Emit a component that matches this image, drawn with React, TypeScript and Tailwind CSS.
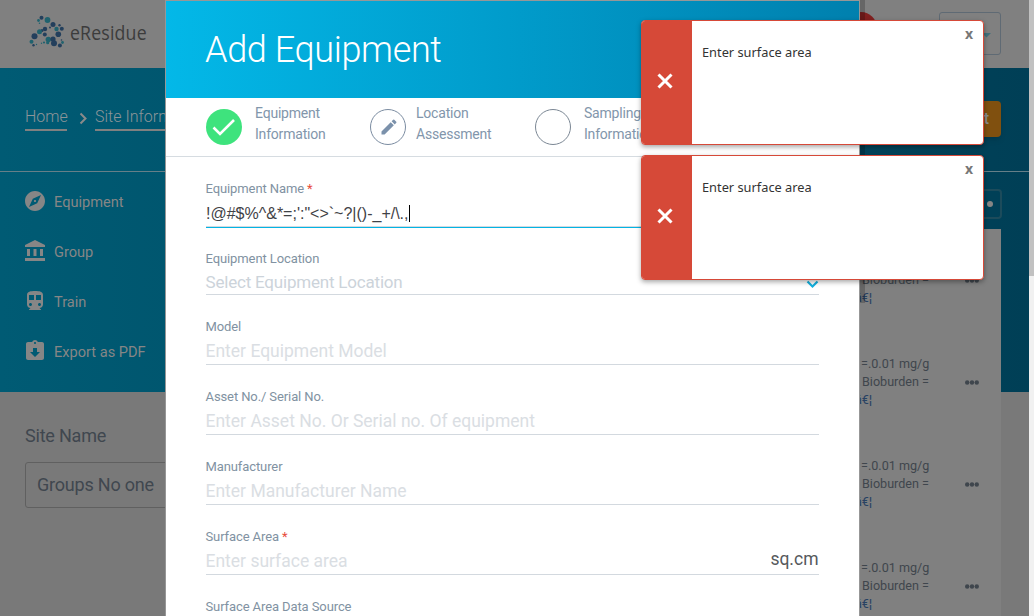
import React from "react";
import {
  MdAccountBalance,
  MdAssignmentReturned,
  MdExplore,
  MdDirectionsTransit,
  MdEdit,
} from "react-icons/md";

const dots: [number, number, number, string][] = [
  [41.5, 17.8, 2, "#233f5c"],
  [47.5, 20, 2.9, "#20626e"],
  [38.5, 20.5, 1.4, "#20626e"],
  [39.5, 23.2, 0.8, "#20626e"],
  [53, 24.5, 2.5, "#233f5c"],
  [59.5, 25.3, 1.2, "#233f5c"],
  [56.5, 29, 2.2, "#20626e"],
  [61.8, 28.8, 2, "#233f5c"],
  [50, 27.5, 1, "#233f5c"],
  [45, 29, 2.2, "#233f5c"],
  [42, 30.5, 1.5, "#233f5c"],
  [39.5, 31.7, 2.5, "#20626e"],
  [34.5, 36.3, 3, "#233f5c"],
  [44.8, 34.4, 2, "#233f5c"],
  [58.3, 34.2, 2.8, "#233f5c"],
  [31.5, 41.8, 2, "#20626e"],
  [48.3, 39.5, 2.7, "#20626e"],
  [53, 39, 2.6, "#233f5c"],
  [54, 43.3, 3, "#233f5c"],
  [47.7, 42.7, 1.6, "#20626e"],
  [59.9, 45.6, 2, "#233f5c"],
  [62.5, 42.5, 1.4, "#20626e"],
  [61.5, 40, 0.8, "#233f5c"],
  [44, 42.5, 1.1, "#20626e"],
  [41.5, 43.3, 0.7, "#20626e"],
  [33.5, 45.2, 1.2, "#233f5c"],
  [36.5, 44.5, 0.7, "#20626e"],
];

const nav = [
  { label: "Equipment", Icon: MdExplore },
  { label: "Group", Icon: MdAccountBalance },
  { label: "Train", Icon: MdDirectionsTransit },
  { label: "Export as PDF", Icon: MdAssignmentReturned },
];

function Backdrop() {
  return (
    <div className="flex h-[616px] w-[1034px]">
      <div className="flex h-full w-[1029px] flex-col bg-[#797979]">
        <header className="flex h-[68px] shrink-0 items-start justify-between bg-[#808080] pr-7">
          <div className="flex">
            <svg width="69" height="68" viewBox="0 0 69 68">
              {dots.map(([x, y, r, c], i) => (
                <circle key={i} cx={x} cy={y} r={r} fill={c} />
              ))}
            </svg>
            <span className="mt-[19px] ml-[0.5px] origin-left scale-x-[0.885] text-[20px] leading-7 font-normal tracking-[0.2px] text-[#3c3c3c] [font-family:'Open_Sans',sans-serif]">
              eResidue
            </span>
          </div>
          <div className="flex items-start">
            <div className="mt-3 mr-[62px] size-8 rounded-full bg-[#81201f]" />
            <div className="mt-3 flex h-[43px] w-[62px] items-center justify-end rounded-[3px] border border-[#5f6a74] pr-[9px]">
              <svg className="mt-[3px]" width="9" height="5" viewBox="0 0 9 5">
                <path d="M0 0h9L4.5 4.5z" fill="#41707c" />
              </svg>
            </div>
          </div>
        </header>
        <div className="flex h-[324px] shrink-0 flex-col bg-linear-to-r from-[#005b74] to-[#003f56]">
          <div className="flex h-[104px] shrink-0 items-start justify-between border-b border-[#667f88] pr-7 pl-[25px]">
            <div className="mt-[38px] flex text-base leading-[21px] font-light text-[#8c9599]">
              <span className="h-[25px] w-[42px] border-b-2 border-[#808080]">Home</span>
              <svg width="28" height="25" viewBox="0 0 28 25" fill="none" stroke="#8a8a8a" strokeWidth="2">
                <path d="M13.5 7.5l5 5-5 5" />
              </svg>
              <span className="h-[25px] border-b-2 border-[#808080] whitespace-nowrap">Site Information</span>
            </div>
            <div className="mt-[33px] flex h-9 w-[130px] items-center justify-end rounded bg-[#80500f] pr-[12px] text-base font-medium whitespace-nowrap text-[#8b8b8b] shadow-md">
              Add Equipment
            </div>
          </div>
          <div className="flex flex-1 justify-between">
            <nav className="flex flex-col pt-[4px] pl-[25px]">
              {nav.map(({ label, Icon }) => (
                <div key={label} className="flex h-[50px] items-center text-[#868686]">
                  <Icon className="-ml-0.5 size-6" />
                  <span className="mt-[3px] ml-[7px] text-[14.6px] whitespace-nowrap">{label}</span>
                </div>
              ))}
            </nav>
            <div className="mt-[17px] mr-[27px] flex h-[30px] w-[150px] items-center justify-end rounded-sm border-2 border-[#1c4b5b] pr-[7px]">
              <div className="size-[6px] rounded-full bg-[#858585]" />
            </div>
          </div>
        </div>
        <div className="flex flex-col pt-[33px] pl-[25px] tracking-[-0.2px] text-[#40474f]">
          <span className="text-lg leading-[22px]">Site Name</span>
          <div className="mt-[15px] flex h-[46px] w-[300px] items-center rounded-[3px] border border-[#606060] pl-[11px] text-lg">
            Groups No one
          </div>
        </div>
      </div>
      <div className="w-[5px] bg-[#f1f1f1]">
        <div className="h-[276px] bg-[#c1c1c1]" />
      </div>
    </div>
  );
}

function Results() {
  return (
    <div className="absolute top-[229px] left-[820px] h-[387px] w-[181px] overflow-hidden bg-[#808080] pt-[24px]">
      {[0, 1, 2, 3].map((i) => (
        <div key={i} className="flex h-[102px] justify-between pr-[22px] pl-[41px] text-[12.6px] leading-[18px] text-[#3f464d]">
          <div className="whitespace-nowrap">
            <div>=.0.01 mg/g</div>
            <div className="pl-px">Bioburden =</div>
            <div className="-ml-[6px] text-[#284263]">â€¦</div>
          </div>
          <svg className="mt-[25px]" width="14" height="5" viewBox="0 0 14 5" fill="#3f464d">
            <circle cx="2.2" cy="2.5" r="2.2" />
            <circle cx="7" cy="2.5" r="2.2" />
            <circle cx="11.8" cy="2.5" r="2.2" />
          </svg>
        </div>
      ))}
    </div>
  );
}

type StepProps = { lines: string[]; className: string; textClass: string; children: React.ReactNode };

function Step({ lines, className, textClass, children }: StepProps) {
  return (
    <div className={"flex shrink-0 " + className}>
      <div className="mt-[11px] size-9 shrink-0">{children}</div>
      <div className={"mt-[5px] text-[14px] leading-[21px] tracking-[-0.2px] text-[#8296ab] " + textClass}>
        {lines.map((l) => (
          <div key={l}>{l}</div>
        ))}
      </div>
    </div>
  );
}

type FieldProps = {
  label: string;
  required?: boolean;
  placeholder: string;
  className: string;
  placeholderClass?: string;
  end?: React.ReactNode;
};

function Field({
  label,
  required,
  placeholder,
  className,
  placeholderClass = "mt-[2px] text-[17.5px] text-[#dadee3]",
  end,
}: FieldProps) {
  return (
    <div className={"flex shrink-0 flex-col border-b border-[#d3d9df] " + className}>
      <div className="-ml-[0.5px] text-[13px] leading-[18px] tracking-[-0.1px] text-[#8192a2]">
        {label} {required && <span className="text-[#e74c3c]">*</span>}
      </div>
      <div className={"-ml-[0.5px] flex justify-between leading-[26px] " + placeholderClass}>
        <span>{placeholder}</span>
        {end}
      </div>
    </div>
  );
}

function Modal() {
  return (
    <div className="absolute top-0 left-[165px] flex h-[616px] w-[695px] flex-col overflow-hidden border-x border-t border-[#979797] bg-white">
      <div className="flex h-[97px] shrink-0 items-center bg-linear-to-r from-[#03b8e8] to-[#0080ae] pl-[39px] text-[36px] font-light tracking-[-0.36px] text-white">
        Add Equipment
      </div>
      <div className="flex h-[59px] shrink-0 border-b border-[#d6dce1] pl-10">
        <Step lines={["Equipment", "Information"]} className="w-[164px]" textClass="ml-[13px]">
          <svg width="36" height="36" viewBox="0 0 36 36">
            <circle cx="18" cy="18" r="18" fill="#3ee37d" />
            <path d="M7.5 18.5l6.5 6.5L28 11" fill="none" stroke="#fff" strokeWidth="2.6" />
          </svg>
        </Step>
        <Step lines={["Location", "Assessment"]} className="w-[165px]" textClass="ml-[10px]">
          <div className="flex size-9 items-center justify-center rounded-full border border-[#7b8ca1] pl-px text-[#7b91ab]">
            <MdEdit className="size-5" />
          </div>
        </Step>
        <Step lines={["Sampling", "Information"]} className="w-[165px]" textClass="ml-[13px]">
          <div className="size-9 rounded-full border border-[#7b8794]" />
        </Step>
      </div>
      <div className="flex flex-col pr-10 pl-[40px]">
        <div className="mt-[23px] flex h-[48px] shrink-0 flex-col border-b border-[#03b4e4]">
          <div className="-ml-[0.5px] text-[13px] leading-[18px] tracking-[-0.1px] text-[#8192a2]">
            Equipment Name <span className="text-[#e74c3c]">*</span>
          </div>
          <div className="flex flex-1 items-center border-b border-[#d3d9df] pt-[3px] text-[16px] leading-[24px] text-[#3f4246] [font-family:'Liberation_Sans',sans-serif]">
            <span>{"!@#$%^&*=;':\"<>`~?|()-_+/\\.,"}</span>
            <span className="h-[17px] w-px bg-black" />
          </div>
        </div>
        <Field
          label="Equipment Location"
          placeholder="Select Equipment Location"
          className="mt-[22px] h-[45px]"
          placeholderClass="mt-px text-[17px] tracking-[-0.2px] text-[#ccd3da]"
          end={
            <svg className="mt-[7px]" width="13" height="16" viewBox="0 0 13 16">
              <path d="M1.5 5.5l5 5 5-5" fill="none" stroke="#13b1df" strokeWidth="2.2" />
            </svg>
          }
        />
        <Field label="Model" placeholder="Enter Equipment Model" className="mt-[23px] h-[47px]" />
        <Field label="Asset No./ Serial No." placeholder="Enter Asset No. Or Serial no. Of equipment" className="mt-[23px] h-[47px]" />
        <Field label="Manufacturer" placeholder="Enter Manufacturer Name" className="mt-[23px] h-[47px]" />
        <Field
          label="Surface Area"
          required
          placeholder="Enter surface area"
          className="mt-[23px] h-[47px]"
          end={<span className="-mt-0.5 mr-[0.5px] text-[#56595c]">sq.cm</span>}
        />
        <Field label="Surface Area Data Source" placeholder="" className="mt-[23px] h-[47px]" />
      </div>
    </div>
  );
}

function Toast({ message }: { message: string }) {
  return (
    <div className="flex h-[125px] w-[343px] overflow-hidden rounded border border-[#d64938] bg-white shadow-[0_2px_5px_rgba(0,0,0,0.35)]">
      <div className="flex w-[50px] shrink-0 items-center justify-center bg-[#d64938] pb-[3px]">
        <svg className="-ml-1" width="16" height="16" viewBox="0 0 16 16">
          <path d="M1.5 1.5l13 13M14.5 1.5l-13 13" stroke="#fff" strokeWidth="3" />
        </svg>
      </div>
      <div className="flex flex-1 justify-between px-[10px] [font-family:'Noto_Sans',sans-serif]">
        <span className="mt-[21px] text-[12.8px] leading-5 text-[#333]">{message}</span>
        <span className="mt-[4px] text-sm leading-[18px] font-bold text-[#777]">x</span>
      </div>
    </div>
  );
}

export default function App() {
  return (
    <div className="relative h-[616px] w-[1034px] overflow-hidden [font-family:Roboto,sans-serif]">
      <Backdrop />
      <Results />
      <div className="absolute top-0 left-[860px] h-[303px] w-[5px] bg-black/20" />
      <Modal />
      <div className="absolute top-5 left-[641px] flex flex-col gap-[10px]">
        <Toast message="Enter surface area" />
        <Toast message="Enter surface area" />
      </div>
    </div>
  );
}
